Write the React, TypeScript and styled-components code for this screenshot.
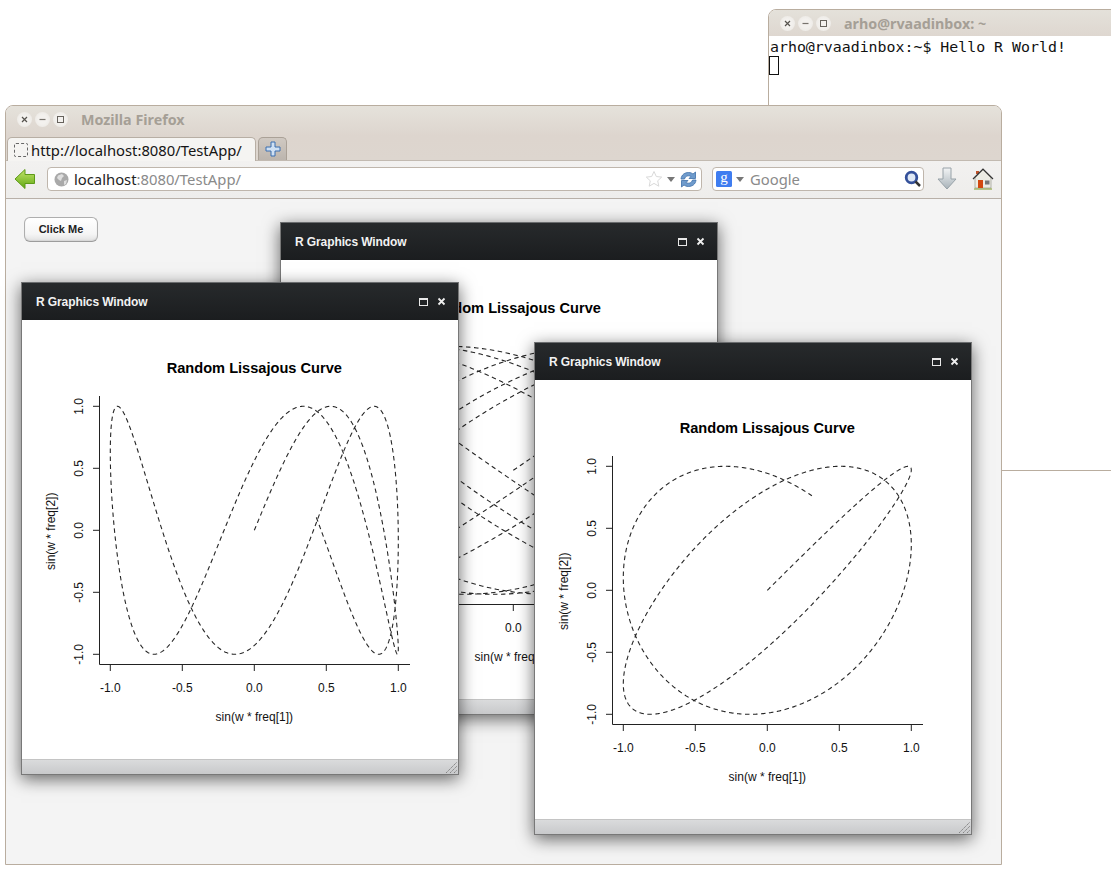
import React from 'react';
import styled, { createGlobalStyle } from 'styled-components';

const GlobalStyle = createGlobalStyle`
  html, body {
    margin: 0;
    padding: 0;
    background: #fff;
  }
`;

const Desktop = styled.div`
  position: relative;
  width: 1111px;
  height: 874px;
  overflow: hidden;
  background: #fff;
`;

/* ---- terminal behind the browser ---- */

const TerminalWindow = styled.div`
  position: absolute;
  left: 768px;
  top: 9px;
  width: 400px;
  height: 462px;
  box-sizing: border-box;
  border: 1px solid #b9ad9f;
  border-radius: 8px 8px 0 0;
  background: #fff;
`;

const TerminalTitle = styled.div`
  display: flex;
  align-items: center;
  height: 26px;
  padding-left: 11px;
  gap: 13px;
  background: linear-gradient(#e4e1da, #ded7d0);
  border-radius: 7px 7px 0 0;
`;

const TerminalBody = styled.div`
  padding: 2px 0 0 1px;
  font-family: "DejaVu Sans Mono", monospace;
  font-size: 14.9px;
  line-height: 19px;
  color: #111;
  white-space: pre;
`;

const TerminalCursor = styled.div`
  width: 10px;
  height: 19px;
  margin: -1px 0 0 -1px;
  box-sizing: border-box;
  border: 1px solid #111;
`;

/* ---- firefox ---- */

const BrowserWindow = styled.div`
  position: absolute;
  left: 5px;
  top: 105px;
  width: 997px;
  height: 760px;
  box-sizing: border-box;
  display: flex;
  flex-direction: column;
  border: 1px solid #b9ad9f;
  border-radius: 8px 8px 0 0;
  background: #f4f4f4;
`;

const BrowserChrome = styled.div`
  flex: none;
  height: 54px;
  display: flex;
  flex-direction: column;
  background: linear-gradient(#e5e2db, #ddd5ce 55%, #ddd6cf);
  border-radius: 7px 7px 0 0;
  border-bottom: 1px solid #c2bab1;
`;

const TitleRow = styled.div`
  height: 27px;
  padding: 0 0 2px 11px;
  display: flex;
  align-items: center;
  gap: 13px;
`;

const WindowTitle = styled.span`
  font-family: "Noto Sans", sans-serif;
  font-weight: 700;
  font-size: 14.3px;
  color: #a59f96;
`;

const ButtonGroup = styled.div`
  display: flex;
  gap: 3px;
`;

const CircleButton = styled.div`
  width: 15px;
  height: 15px;
  border-radius: 50%;
  display: flex;
  align-items: center;
  justify-content: center;
  background: radial-gradient(circle, #f3f1ee 40%, #e9e6e1);
`;

const TabRow = styled.div`
  flex: 1;
  display: flex;
  align-items: flex-end;
  padding-left: 1px;
  gap: 2px;
`;

const ActiveTab = styled.div`
  width: 249px;
  height: 24px;
  margin-bottom: -1px;
  box-sizing: border-box;
  display: flex;
  align-items: center;
  padding-left: 6px;
  gap: 3px;
  background: #f5f4f2;
  border: 1px solid #b7aea4;
  border-bottom: none;
  border-radius: 5px 5px 0 0;
  font-family: "Noto Sans", sans-serif;
  font-size: 14.8px;
  color: #151515;
`;

const Favicon = styled.div`
  width: 12px;
  height: 12px;
  border: 1px dashed #666;
  border-radius: 2px;
`;

const NewTabButton = styled.div`
  width: 29px;
  height: 23px;
  box-sizing: border-box;
  display: flex;
  align-items: center;
  justify-content: center;
  background: linear-gradient(#d0c9c2, #bcb5ae);
  border: 1px solid #aaa197;
  border-bottom: none;
  border-radius: 5px 5px 0 0;
`;

const NavBar = styled.div`
  flex: none;
  height: 38px;
  box-sizing: border-box;
  display: flex;
  align-items: center;
  padding: 0 6px 1px 8px;
  background: linear-gradient(#f2f1f0, #eeedeb);
  border-bottom: 1px solid #b8b0a8;
`;

const FieldBox = styled.div<{ $width: number; $gap: number }>`
  width: ${(p) => p.$width}px;
  height: 24px;
  margin-left: ${(p) => p.$gap}px;
  flex: none;
  box-sizing: border-box;
  display: flex;
  align-items: center;
  background: #fff;
  border: 1px solid #bfb6ac;
  border-radius: 4px;
  font-family: "Noto Sans", sans-serif;
  font-size: 14.8px;
`;

const UrlHost = styled.span`
  color: #222;
  margin-left: 5px;
`;

const UrlRest = styled.span`
  color: #8a8a8a;
  flex: 1;
`;

const SearchHint = styled.span`
  color: #8a8a8a;
  margin-left: 6px;
  flex: 1;
`;

const DropMarker = styled.div`
  width: 0;
  height: 0;
  margin-left: 4px;
  border-left: 4px solid transparent;
  border-right: 4px solid transparent;
  border-top: 5px solid #777;
`;

const IconSlot = styled.span<{ $left?: number; $right?: number }>`
  display: flex;
  flex: none;
  margin-left: ${(p) => p.$left ?? 0}px;
  margin-right: ${(p) => p.$right ?? 0}px;
`;

const BrowserContent = styled.div`
  position: relative;
  flex: 1;
  background: #f4f4f4;
`;

const ClickButton = styled.button`
  position: absolute;
  left: 18px;
  top: 18px;
  width: 74px;
  height: 25px;
  padding: 0 0 2px;
  border: 1px solid #aeaeae;
  border-bottom-color: #9c9c9c;
  border-radius: 6px;
  background: linear-gradient(#ffffff, #f5f5f5 70%, #e2e2e2);
  box-shadow: inset 0 -1px 1px #d6d6d6;
  font-family: "Liberation Sans", Arial, sans-serif;
  font-weight: 700;
  font-size: 11px;
  color: #222;
`;

/* ---- R graphics sub windows ---- */

const GraphicsWindow = styled.div<{ $x: number; $y: number }>`
  position: absolute;
  left: ${(p) => p.$x}px;
  top: ${(p) => p.$y}px;
  width: 438px;
  height: 493px;
  box-sizing: border-box;
  display: flex;
  flex-direction: column;
  background: #fff;
  border: 1px solid #787878;
  border-top-color: #6a6c6e;
  box-shadow: 0 4px 16px rgba(0, 0, 0, 0.6);
`;

const GraphicsHeader = styled.div`
  flex: none;
  height: 37px;
  display: flex;
  align-items: center;
  padding: 0 12px 0 14px;
  background: linear-gradient(#272a2c, #1b1d1f);
  font-family: "Liberation Sans", Arial, sans-serif;
  font-weight: 700;
  font-size: 12px;
  letter-spacing: -0.1px;
  color: #f2f2f2;
`;

const GraphicsTitle = styled.span`
  flex: 1;
`;

const HeaderControls = styled.div`
  display: flex;
  align-items: center;
  gap: 9px;
`;

const MaximizeBox = styled.div`
  width: 9px;
  height: 8px;
  box-sizing: border-box;
  border: 1px solid #e8e8e8;
  border-top-width: 2px;
`;

const PlotSurface = styled.svg`
  flex: 1;
  display: block;
  width: 436px;
  min-height: 0;
`;

const PlotTitle = styled.text`
  font-family: "Liberation Sans", Arial, sans-serif;
  font-weight: 700;
  font-size: 14.6px;
  fill: #000;
  text-anchor: middle;
`;

const PlotLabel = styled.text`
  font-family: "Liberation Sans", Arial, sans-serif;
  font-size: 12px;
  fill: #111;
  text-anchor: middle;
`;

const GraphicsFooter = styled.div`
  flex: none;
  height: 15px;
  box-sizing: border-box;
  display: flex;
  justify-content: flex-end;
  align-items: flex-end;
  background: linear-gradient(#dadbdc, #c8c9cb);
  border-top: 1px solid #c4c4c4;
`;

interface Curve {
  fx: number;
  fy: number;
  end: number;
}

const CX = 231.3;
const CY = 210.3;
const HX = 144;
const HY = 124;
const TICKS = [-1, -0.5, 0, 0.5, 1];

const curvePath = ({ fx, fy, end }: Curve) => {
  const steps = 2400;
  const points: string[] = [];
  for (let i = 0; i <= steps; i++) {
    const t = (end * i) / steps;
    const x = CX + HX * Math.sin(fx * t);
    const y = CY - HY * Math.sin(fy * t);
    points.push(`${x.toFixed(2)},${y.toFixed(2)}`);
  }
  return 'M' + points.join('L');
};

const Plot: React.FC<{ curve: Curve }> = ({ curve }) => (
  <PlotSurface viewBox="-1 0 436 439">
    <PlotTitle x={CX} y={53}>Random Lissajous Curve</PlotTitle>
    <path d="M76.5 76V344.5H387" fill="none" stroke="#222" strokeWidth={1} />
    {TICKS.map((v) => (
      <g key={v}>
        <line x1={CX + HX * v} x2={CX + HX * v} y1={344} y2={351} stroke="#222" />
        <line x1={70} x2={76} y1={CY - HY * v} y2={CY - HY * v} stroke="#222" />
        <PlotLabel x={CX + HX * v} y={372}>{v.toFixed(1)}</PlotLabel>
        <PlotLabel transform={`translate(60 ${CY - HY * v}) rotate(-90)`}>{v.toFixed(1)}</PlotLabel>
      </g>
    ))}
    <PlotLabel x={CX} y={401}>sin(w * freq[1])</PlotLabel>
    <PlotLabel transform={`translate(32 ${CY + 1}) rotate(-90)`}>sin(w * freq[2])</PlotLabel>
    <path d={curvePath(curve)} fill="none" stroke="#262626" strokeWidth={1.1} strokeDasharray="4.5 3.5" />
  </PlotSurface>
);

const Graphics: React.FC<{ x: number; y: number; curve: Curve }> = ({ x, y, curve }) => (
  <GraphicsWindow $x={x} $y={y}>
    <GraphicsHeader>
      <GraphicsTitle>R Graphics Window</GraphicsTitle>
      <HeaderControls>
        <MaximizeBox />
        <svg width="9" height="9" viewBox="0 0 9 9">
          <path d="M1.5 1.5l6 6M7.5 1.5l-6 6" stroke="#eee" strokeWidth="1.8" />
        </svg>
      </HeaderControls>
    </GraphicsHeader>
    <Plot curve={curve} />
    <GraphicsFooter>
      <svg width="13" height="13" viewBox="0 0 13 13">
        <path d="M1 12L12 1M5 12l7-7M9 12l3-3" stroke="#858585" strokeWidth="1" strokeDasharray="1.6 .6" />
      </svg>
    </GraphicsFooter>
  </GraphicsWindow>
);

const WindowButtons: React.FC = () => (
  <ButtonGroup>
    <CircleButton>
      <svg width="9" height="9" viewBox="0 0 9 9">
        <path d="M2 2l5 5M7 2l-5 5" stroke="#55524d" strokeWidth="1.2" />
      </svg>
    </CircleButton>
    <CircleButton>
      <svg width="9" height="9" viewBox="0 0 9 9">
        <path d="M1.5 4.5h6" stroke="#77736d" strokeWidth="1.2" />
      </svg>
    </CircleButton>
    <CircleButton>
      <svg width="9" height="9" viewBox="0 0 9 9">
        <rect x="1.5" y="1.5" width="6" height="6" fill="none" stroke="#66625c" />
      </svg>
    </CircleButton>
  </ButtonGroup>
);

const BackIcon = () => (
  <svg width="22" height="22" viewBox="0 0 22 22">
    <defs>
      <linearGradient id="back" x1="0" y1="0" x2="0" y2="1">
        <stop offset="0" stopColor="#c5e46a" />
        <stop offset="1" stopColor="#5fa811" />
      </linearGradient>
    </defs>
    <path d="M1 11L11 1.5V6.5H20.5V15.5H11V20.5Z" fill="url(#back)" stroke="#5d9a18" />
  </svg>
);

const GlobeIcon = () => (
  <svg width="15" height="15" viewBox="0 0 15 15">
    <circle cx="7.5" cy="7.5" r="7" fill="#a9a9a9" />
    <path d="M4 3.5l4-1.500 2 2-2 2-1 3-2-1-2-2zM10 9l3-1-1 4-2 1z" fill="#dedede" />
  </svg>
);

const StarIcon = () => (
  <svg width="18" height="18" viewBox="0 0 18 18">
    <path d="M9 1.500l2.300 5 5.400.6-4 3.700 1.100 5.400L9 13.400l-4.800 2.800 1.100-5.400-4-3.700 5.400-.6z" fill="#fff" stroke="#d9d9d9" />
  </svg>
);

const ReloadIcon = () => (
  <svg width="17" height="17" viewBox="0 0 17 17">
    <path d="M1 8C1.500 3.500 5 1.500 8.500 1.500c2 0 3.500.7 4.500 1.500L15.500 1v6.500H9L11 5.500C9 4.300 5.500 4.500 4.500 8z" fill="#6f9bcc" stroke="#3d6ea8" strokeWidth=".8" />
    <path d="M16 9c-.5 4.500-4 6.500-7.500 6.500-2 0-3.500-.7-4.500-1.500L1.500 16V9.500H8L6 11.500c2 1.200 5.500 1 6.500-2.500z" fill="#6f9bcc" stroke="#3d6ea8" strokeWidth=".8" />
  </svg>
);

const GoogleIcon = () => (
  <svg width="16" height="16" viewBox="0 0 16 16">
    <rect width="16" height="16" rx="1.500" fill="#3f7df0" />
    <text x="8" y="11" textAnchor="middle" fontFamily="Liberation Serif, serif" fontSize="15" fill="#fff">g</text>
  </svg>
);

const SearchIcon = () => (
  <svg width="18" height="18" viewBox="0 0 18 18">
    <circle cx="7.500" cy="7.500" r="5.300" fill="#dfe8f5" stroke="#34509a" strokeWidth="2.800" />
    <path d="M11.500 11.500L16 16" stroke="#333" strokeWidth="2.500" />
  </svg>
);

const DownloadIcon = () => (
  <svg width="20" height="24" viewBox="0 0 20 24">
    <defs>
      <linearGradient id="dl" x1="0" y1="0" x2="0" y2="1">
        <stop offset="0" stopColor="#f2f4f5" />
        <stop offset="1" stopColor="#a9b3b9" />
      </linearGradient>
    </defs>
    <path d="M6 1h8v11h5L10 22 1 12h5z" fill="url(#dl)" stroke="#98a2a8" />
  </svg>
);

const HomeIcon = () => (
  <svg width="22" height="22" viewBox="0 0 22 22">
    <path d="M4 3h3v3H4z" fill="#c0532a" />
    <path d="M3 10L11 2l8 8v10H3z" fill="#ececE4" stroke="#8a8a80" strokeWidth=".6" />
    <path d="M1 11L11 1l10 10" fill="none" stroke="#333" strokeWidth="1.200" />
    <path d="M6 12h5v8H6z" fill="#d2480f" />
    <path d="M13 12.500h4.500v4H13z" fill="#777" />
    <path d="M2 21h18" stroke="#8fa84a" strokeWidth="1.200" />
  </svg>
);

const leftCurve: Curve = { fx: 0.3558, fy: 1, end: 25.26 };
const rightCurve: Curve = { fx: 0.868, fy: 1, end: 14.84 };
const backCurve: Curve = { fx: 1, fy: 0.7945, end: 45.55 };

const App: React.FC = () => (
  <Desktop>
    <GlobalStyle />
    <TerminalWindow>
      <TerminalTitle>
        <WindowButtons />
        <WindowTitle>arho@rvaadinbox: ~</WindowTitle>
      </TerminalTitle>
      <TerminalBody>
        arho@rvaadinbox:~$ Hello R World!
        <TerminalCursor />
      </TerminalBody>
    </TerminalWindow>

    <BrowserWindow>
      <BrowserChrome>
        <TitleRow>
          <WindowButtons />
          <WindowTitle>Mozilla Firefox</WindowTitle>
        </TitleRow>
        <TabRow>
          <ActiveTab>
            <Favicon />
            http://localhost:8080/TestApp/
          </ActiveTab>
          <NewTabButton>
            <svg width="16" height="16" viewBox="0 0 16 16">
              <path d="M6 1h4v5h5v4h-5v5H6v-5H1V6h5z" fill="#cfe0f3" stroke="#3a6fb0" />
            </svg>
          </NewTabButton>
        </TabRow>
      </BrowserChrome>
      <NavBar>
        <IconSlot><BackIcon /></IconSlot>
        <FieldBox $width={655} $gap={11}>
          <IconSlot $left={6}><GlobeIcon /></IconSlot>
          <UrlHost>localhost</UrlHost>
          <UrlRest>:8080/TestApp/</UrlRest>
          <IconSlot><StarIcon /></IconSlot>
          <DropMarker />
          <IconSlot $left={5} $right={4}><ReloadIcon /></IconSlot>
        </FieldBox>
        <FieldBox $width={212} $gap={10}>
          <IconSlot $left={3}><GoogleIcon /></IconSlot>
          <DropMarker />
          <SearchHint>Google</SearchHint>
          <IconSlot $right={1}><SearchIcon /></IconSlot>
        </FieldBox>
        <IconSlot $left={13}><DownloadIcon /></IconSlot>
        <IconSlot $left={15}><HomeIcon /></IconSlot>
      </NavBar>
      <BrowserContent>
        <ClickButton>Click Me</ClickButton>
        <Graphics x={274} y={23} curve={backCurve} />
        <Graphics x={15} y={83} curve={leftCurve} />
        <Graphics x={528} y={143} curve={rightCurve} />
      </BrowserContent>
    </BrowserWindow>
  </Desktop>
);

export default App;
